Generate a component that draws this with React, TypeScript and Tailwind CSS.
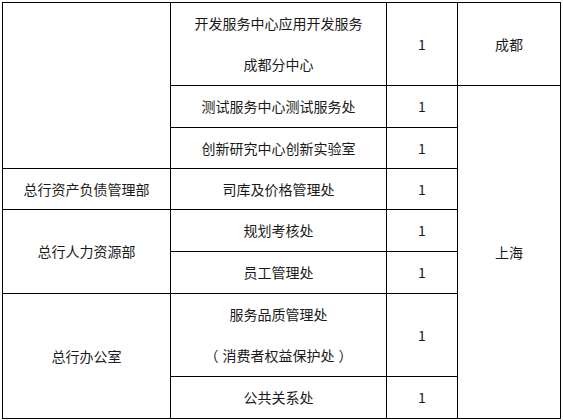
import React from "react";

const td = "border border-black text-center align-middle p-0";

export default function App() {
  return (
    <div
      className="w-[563px] h-[420px] bg-white pt-[2px] pl-[2px] text-[14px] text-[#1a1a1a]"
      style={{ fontFamily: '"Noto Sans CJK SC", "Noto Sans", sans-serif' }}
    >
      <table className="border-collapse table-fixed w-[558px]">
        <colgroup>
          <col className="w-[168px]" />
          <col className="w-[216px]" />
          <col className="w-[71px]" />
          <col className="w-[103px]" />
        </colgroup>
        <tbody>
          <tr className="h-[83px]">
            <td className={td} rowSpan={3}></td>
            <td className={`${td} leading-[41px]`}>
              <div>开发服务中心应用开发服务</div>
              <div>成都分中心</div>
            </td>
            <td className={td}>1</td>
            <td className={td}>成都</td>
          </tr>
          <tr className="h-[42px]">
            <td className={td}>测试服务中心测试服务处</td>
            <td className={td}>1</td>
            <td className={td} rowSpan={7}>上海</td>
          </tr>
          <tr className="h-[41px]">
            <td className={td}>创新研究中心创新实验室</td>
            <td className={td}>1</td>
          </tr>
          <tr className="h-[41px]">
            <td className={td}>总行资产负债管理部</td>
            <td className={td}>司库及价格管理处</td>
            <td className={td}>1</td>
          </tr>
          <tr className="h-[42px]">
            <td className={td} rowSpan={2}>总行人力资源部</td>
            <td className={td}>规划考核处</td>
            <td className={td}>1</td>
          </tr>
          <tr className="h-[42px]">
            <td className={td}>员工管理处</td>
            <td className={td}>1</td>
          </tr>
          <tr className="h-[82px]">
            <td className={td} rowSpan={2}>总行办公室</td>
            <td className={`${td} leading-[41px]`}>
              <div>服务品质管理处</div>
              <div>
                <span className="mr-[4px]">（</span>消费者权益保护处<span className="ml-[4px]">）</span>
              </div>
            </td>
            <td className={td}>1</td>
          </tr>
          <tr className="h-[42px]">
            <td className={td}>公共关系处</td>
            <td className={td}>1</td>
          </tr>
        </tbody>
      </table>
    </div>
  );
}
